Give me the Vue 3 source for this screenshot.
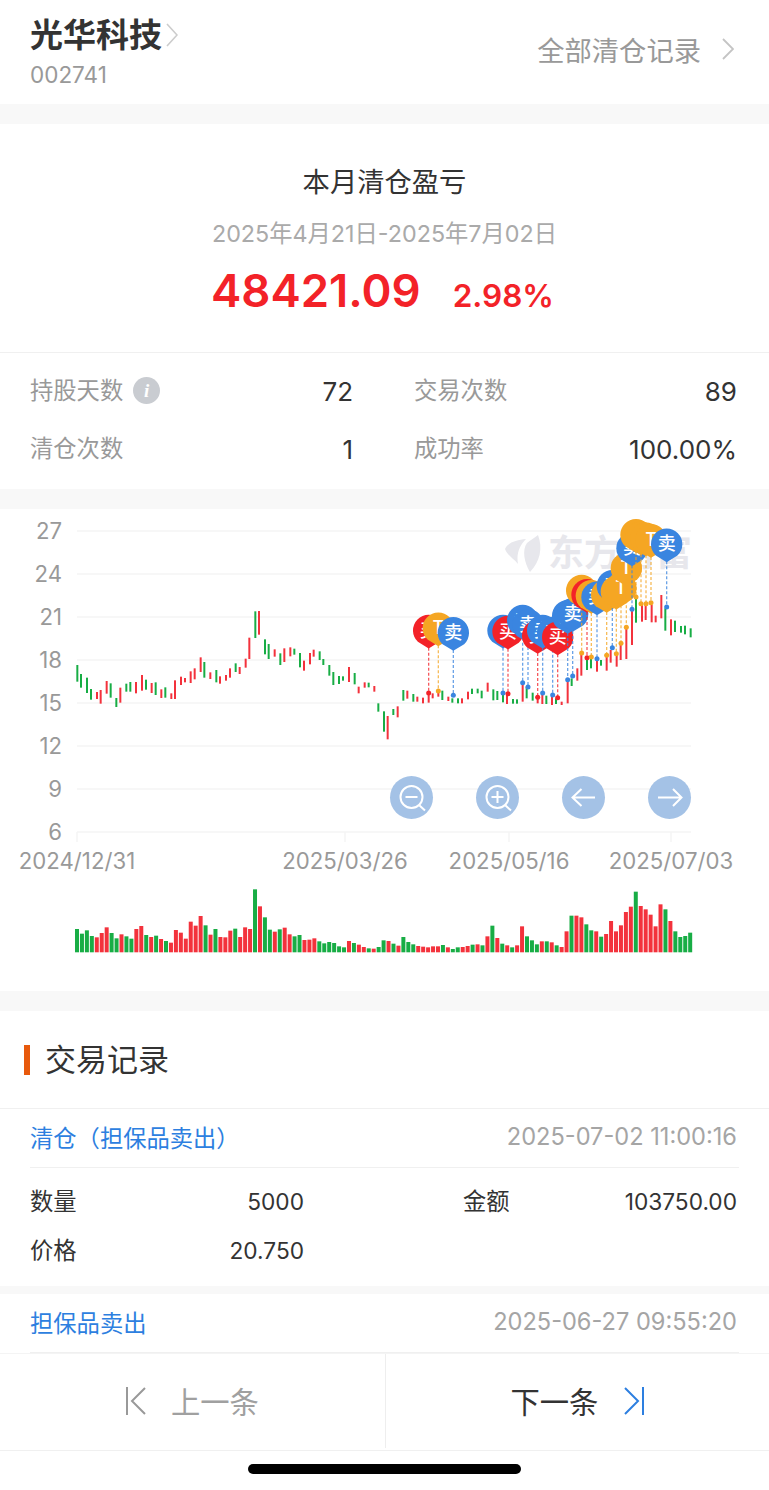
<template>
  <div class="page">
    <header class="head">
      <div>
        <div class="stock">
          <span class="stock-name">光华科技</span>
          <svg class="chev-s" viewBox="0 0 12 24"><path d="M1 1l10 11L1 23" /></svg>
        </div>
        <div class="stock-code">002741</div>
      </div>
      <div class="all-link">
        <span>全部清仓记录</span>
        <svg class="chev-r" viewBox="0 0 12 22"><path d="M1 1l10 10L1 21" /></svg>
      </div>
    </header>

    <section class="summary">
      <div class="sum-title">本月清仓盈亏</div>
      <div class="sum-date">2025年4月21日-2025年7月02日</div>
      <div class="sum-value">
        <span class="profit">48421.09</span>
        <span class="percent">2.98%</span>
      </div>
    </section>

    <section class="stats">
      <div class="stat">
        <span class="stat-label">持股天数<i class="info">i</i></span>
        <span class="stat-val">72</span>
      </div>
      <div class="stat">
        <span class="stat-label">交易次数</span>
        <span class="stat-val">89</span>
      </div>
      <div class="stat">
        <span class="stat-label">清仓次数</span>
        <span class="stat-val">1</span>
      </div>
      <div class="stat">
        <span class="stat-label">成功率</span>
        <span class="stat-val">100.00%</span>
      </div>
    </section>

    <section class="chart">
      <svg class="chart-svg" viewBox="0 509 769 482" width="769" height="482">
        <!-- 水印 -->
        <g fill="#e7e7ec">
          <path d="M505 549C507 543 516 540 526 539C520 545 516 553 518 564C513 558 507 555 505 549Z" />
          <path d="M538 535C543 548 540 562 530 572C524 562 522 550 527 543C530 540 535 538 538 535Z" />
          <text x="548" y="566" class="mark">东方财富</text>
        </g>
        <line v-for="y in gridY" :key="y" x1="77" x2="691" :y1="y" :y2="y" class="grid" />
        <text v-for="(l, i) in yLabels" :key="l" x="62" :y="gridY[i] + 8" class="axis" text-anchor="end">{{ l }}</text>
        <line v-for="t in xTicks" :key="t.x" :x1="t.x" :x2="t.x" y1="832" y2="842" class="grid" />
        <text v-for="t in xTicks" :key="t.label" :x="t.tx" y="869" class="axis" text-anchor="middle">{{ t.label }}</text>

        <rect v-for="(c, i) in candles" :key="'c' + i" :x="c.x - 1" :y="c.y" width="2" :height="c.h" :fill="c.color" />

        <g v-for="(p, i) in pins" :key="'p' + i">
          <line :x1="p.x" :x2="p.x" :y1="p.y + 17" :y2="p.dot" :stroke="p.color" stroke-width="1.300" stroke-dasharray="3 2" opacity="0.75" />
          <circle :cx="p.x" :cy="p.dot" r="2.500" :fill="p.color" />
          <g :transform="`translate(${p.x} ${p.y})`">
            <path d="M0 17.800L-10.800 11.200A15.700 15.700 0 1 1 10.800 11.200Z" :fill="p.color" />
            <text y="6" class="pin-text" text-anchor="middle">{{ p.text }}</text>
          </g>
        </g>

        <rect v-for="(v, i) in volumes" :key="'v' + i" :x="v.x" :y="v.y" width="4" :height="v.h" :fill="v.color" />
      </svg>
      <div class="tools">
        <div class="tool">
          <svg viewBox="0 0 43 43"><circle cx="21.500" cy="21" r="11" /><path d="M15.500 21h12M29 29l6 5.500" /></svg>
        </div>
        <div class="tool">
          <svg viewBox="0 0 43 43"><circle cx="21.500" cy="21" r="11" /><path d="M15.500 21h12M21.500 15v12M29 29l6 5.500" /></svg>
        </div>
        <div class="tool">
          <svg viewBox="0 0 43 43"><path d="M33 21.500H10.500M19.500 13l-9 8.500 9 8.500" /></svg>
        </div>
        <div class="tool">
          <svg viewBox="0 0 43 43"><path d="M10 21.500h23M25 13l8.500 8.500L25 30" /></svg>
        </div>
      </div>
    </section>

    <section class="records">
      <h2 class="rec-title"><span>交易记录</span></h2>
      <div class="rec">
        <div class="rec-head">
          <span class="rec-type">清仓（担保品卖出）</span>
          <span class="rec-time">2025-07-02 11:00:16</span>
        </div>
        <div class="rec-body">
          <div class="cell left"><span>数量</span><span>5000</span></div>
          <div class="cell right"><span>金额</span><span>103750.00</span></div>
          <div class="cell left"><span>价格</span><span>20.750</span></div>
        </div>
      </div>
      <div class="rec next">
        <div class="rec-head">
          <span class="rec-type">担保品卖出</span>
          <span class="rec-time">2025-06-27 09:55:20</span>
        </div>
      </div>
    </section>

    <footer class="pager">
      <div class="pg prev">
        <svg width="20" height="28" viewBox="0 0 20 28"><path d="M1 0v28M19 1L6 14l13 13" /></svg>
        <span>上一条</span>
      </div>
      <div class="pg nxt">
        <span>下一条</span>
        <svg width="20" height="28" viewBox="0 0 20 28"><path d="M1 1l13 13L1 27M19 0v28" /></svg>
      </div>
    </footer>
    <div class="home-wrap"><div class="home-bar"></div></div>
  </div>
</template>

<script setup>
const RED = '#f3323c'
const GREEN = '#18ad45'
const BLUE = '#3a85e0'
const ORANGE = '#f5a623'
const PIN_RED = '#f32228'

const gridY = [531, 574, 617, 660, 703, 746, 789, 832]
const yLabels = ['27', '24', '21', '18', '15', '12', '9', '6']

const xTicks = [
  { x: 77, tx: 77, label: '2024/12/31' },
  { x: 345, tx: 345, label: '2025/03/26' },
  { x: 509, tx: 509, label: '2025/05/16' },
  { x: 671, tx: 671, label: '2025/07/03' }
]

// 坐标从参考图量出来的：[x, 上, 下, 颜色]
const leftCandles = [
  [232,465,515,'g'],[243,492,533,'g'],[261,503,549,'g'],[273,537,569,'g'],[291,546,567,'r'],[302,540,581,'r'],
  [320,513,551,'r'],[332,520,563,'g'],[349,564,591,'g'],[361,533,578,'r'],[379,521,545,'g'],[391,516,545,'g'],
  [408,516,550,'r'],[426,495,542,'r'],[438,509,539,'g'],[455,519,549,'r'],[467,517,555,'g'],[484,538,564,'r'],
  [496,532,563,'g'],[514,550,567,'r'],[525,511,567,'r'],[543,500,525,'r'],[555,504,517,'r'],[572,484,519,'r'],
  [584,475,508,'r'],[602,442,486,'r'],[613,456,503,'g'],[631,487,507,'r'],[649,480,517,'g'],[660,499,521,'r'],
  [678,495,512,'r'],[690,475,503,'r'],[707,460,486,'g'],[719,471,492,'r'],[737,446,473,'r'],[748,383,447,'r'],
  [766,304,384,'g'],[777,303,374,'r'],[795,388,433,'g'],[806,402,447,'g'],[824,418,440,'r'],[841,430,465,'g'],
  [853,415,456,'r'],[871,412,439,'r'],[883,416,434,'g'],[900,429,472,'g'],[912,452,482,'r'],[930,429,463,'r'],
  [941,419,440,'r'],[959,424,450,'g'],[970,447,465,'g'],[988,465,497,'g'],[1000,486,525,'g'],[1017,498,522,'g'],
  [1029,499,512,'g'],[1047,471,516,'r'],[1064,489,523,'g'],[1076,530,550,'r'],[1094,517,533,'r'],[1106,518,532,'g'],
  [1123,528,545,'r'],[1135,580,605,'g'],[1152,604,665,'g']
]
const rightCandles = [
  [8,618,688,'r'],[25,597,615,'g'],[38,589,622,'r'],[55,540,572,'g'],[67,542,566,'r'],[85,552,575,'g'],
  [97,560,575,'r'],[114,563,580,'r'],[131,545,578,'r'],[143,550,565,'r'],[160,545,560,'r'],[172,542,570,'g'],
  [190,560,573,'r'],[202,565,578,'g'],[219,565,580,'g'],[231,565,580,'r'],[249,545,568,'r'],[261,536,552,'g'],
  [278,536,550,'g'],[290,542,565,'g'],[308,518,545,'r'],[325,538,571,'g'],[337,543,570,'g'],[354,545,577,'g'],
  [366,550,582,'r'],[384,567,581,'g'],[396,568,581,'g'],[413,525,575,'r'],[425,530,565,'g'],[443,548,572,'g'],
  [458,555,580,'r'],[472,555,582,'r'],[484,557,582,'g'],[501,560,585,'r'],[513,565,582,'g'],[530,575,585,'r'],
  [548,510,580,'r'],[560,505,528,'g'],[577,475,512,'r'],[589,432,497,'r'],[606,450,480,'g'],[618,447,475,'g'],
  [636,450,485,'r'],[648,450,467,'g'],[665,440,482,'r'],[677,420,458,'r'],[695,430,470,'r'],[707,405,450,'r'],
  [724,355,447,'r'],[741,300,405,'r'],[753,265,338,'g'],[771,285,335,'r'],[782,285,330,'r'],[800,285,337,'r'],
  [812,317,337,'r'],[829,255,325,'r'],[841,295,362,'g'],[858,328,376,'r'],[870,332,366,'g'],[888,348,368,'g'],
  [900,347,373,'g'],[917,355,382,'g']
]

const candles = [
  ...leftCandles.map(([x, t, b, c]) => ({ x: x / 3, y: 510 + t / 3, h: (b - t) / 3, color: c === 'r' ? RED : GREEN })),
  ...rightCandles.map(([x, t, b, c]) => ({ x: 385 + x / 3, y: 510 + t / 3, h: (b - t) / 3, color: c === 'r' ? RED : GREEN }))
]

const pinStyle = {
  b: { color: BLUE, text: '卖' },
  r: { color: PIN_RED, text: '买' },
  o: { color: ORANGE, text: 'T' }
}
const pins = [
  [131,362,549,'r'],[160,355,543,'o'],[205,369,556,'b'],[354,362,549,'b'],[369,365,551,'r'],[413,332,518,'b'],
  [429,345,531,'b'],[458,378,562,'r'],[473,362,549,'b'],[503,368,555,'b'],[518,382,563,'r'],[548,318,509,'b'],
  [563,312,498,'b'],[590,242,429,'o'],[606,255,443,'r'],[619,258,441,'o'],[636,262,446,'b'],[665,255,436,'o'],
  [682,228,413,'b'],[694,245,431,'o'],[708,235,400,'o'],[724,175,352,'o'],[741,115,298,'b'],[753,75,261,'o'],
  [768,82,281,'o'],[783,85,281,'o'],[798,90,278,'o'],[845,103,291,'b']
].map(([x, y, dot, t]) => ({
  x: 385 + x / 3,
  y: 510 + y / 3,
  dot: 510 + dot / 3,
  ...pinStyle[t]
}))

// 成交量柱顶部，同样来自参考图
const volLeft = 'g507 g521 g511 g528 r532 r519 r502 g519 g535 r523 g529 g536 r507 r498 g525 r531 g527 r537 g543 r548 r510 r518 r536 r485 r497 r468 g496 r524 g507 r531 r532 r512 g506 r531 r502 r507 g388 r439 g472 g509 r515 g508 r503 r523 g529 g525 r540 r539 r535 g544 g550 g546 g549 g559 g562 r543 g549 r554 r561 g565 r566 g561 g541'
const volRight = 'r543 g551 r557 g531 g546 g553 r558 r560 r562 r559 r559 g555 r562 g567 g562 r561 r558 g554 r553 g556 r529 g497 r534 g551 r556 g562 r556 r499 g529 g541 g553 r544 g544 r547 g556 r561 r514 g467 r467 r472 g493 g511 r514 g530 r522 r483 r514 r496 r456 r440 g395 r438 r448 r464 r499 r433 g448 r483 g514 g531 g528 g518'
const volumes = (volLeft + ' ' + volRight).split(' ').map((s, i) => {
  const top = 760 + Number(s.slice(1)) / 3
  return {
    x: 75 + i * 4.945,
    y: top,
    h: 952.3 - top,
    color: s[0] === 'r' ? RED : GREEN
  }
})
</script>

<style>
html, body {
  margin: 0;
  background: #fff;
}
</style>

<style scoped>
.page {
  width: 769px;
  height: 1490px;
  overflow: hidden;
  background: #f8f8f8;
  font-family: Inter, "Noto Sans CJK SC", sans-serif;
  color: #333;
  display: flex;
  flex-direction: column;
}

.head {
  height: 104px;
  flex: none;
  box-sizing: border-box;
  padding: 14px 35px 0 30px;
  background: #fff;
  display: flex;
  justify-content: space-between;
}

.stock {
  display: flex;
  align-items: center;
  height: 42px;
}

.stock-name {
  font-size: 33px;
  font-weight: 700;
  line-height: 42px;
}

.chev-s {
  width: 12px;
  height: 24px;
  margin-left: 4px;
  fill: none;
  stroke: #ccc;
  stroke-width: 1.600;
}

.stock-code {
  font-size: 22.500px;
  line-height: 30px;
  color: #999;
  margin-top: 4px;
}

.all-link {
  display: flex;
  align-items: center;
  height: 46px;
  margin-top: 12px;
  font-size: 27.300px;
  color: #999;
}

.chev-r {
  width: 12px;
  height: 22px;
  margin-left: 21px;
  fill: none;
  stroke: #c4c4c4;
  stroke-width: 1.800;
}

.summary {
  flex: none;
  margin-top: 20px;
  height: 229px;
  box-sizing: border-box;
  padding-top: 40px;
  background: #fff;
  border-bottom: 1px solid #f0f0f0;
  text-align: center;
}

.sum-title {
  font-size: 27.300px;
  line-height: 38px;
}

.sum-date {
  margin-top: 17px;
  font-size: 23.300px;
  line-height: 30px;
  color: #aaa;
}

.sum-value {
  margin-top: 13px;
  padding-right: 4px;
  display: flex;
  justify-content: center;
  align-items: baseline;
  gap: 32px;
  color: #f32228;
  line-height: 58px;
}

.profit {
  font-size: 45.500px;
  font-weight: 600;
}

.percent {
  font-size: 31.500px;
  font-weight: 600;
}

.stats {
  flex: none;
  height: 136px;
  box-sizing: border-box;
  padding: 9px 32px 0 30px;
  background: #fff;
  display: grid;
  grid-template-columns: 323px 323px;
  grid-auto-rows: 58px;
  column-gap: 61px;
}

.stat {
  display: flex;
  justify-content: space-between;
  align-items: center;
}

.stat-label {
  display: flex;
  align-items: center;
  padding-bottom: 4px;
  font-size: 23.300px;
  color: #999;
}

.info {
  width: 27px;
  height: 27px;
  margin: 2px 0 0 10px;
  border-radius: 50%;
  background: #c9ccd1;
  color: #fff;
  font: italic 700 19px/27px "Liberation Serif", serif;
  text-align: center;
}

.stat-val {
  font-size: 26px;
  color: #333;
}

.chart {
  flex: none;
  position: relative;
  margin-top: 20px;
  height: 482px;
  background: #fff;
}

.chart-svg {
  display: block;
}

.grid {
  stroke: #f4f4f4;
  stroke-width: 1.500;
}

.axis {
  font-size: 22.200px;
  fill: #999;
  font-family: Inter, sans-serif;
}

.mark {
  font-size: 36px;
  font-weight: 700;
  font-family: "Noto Sans CJK SC", sans-serif;
}

.pin-text {
  font-size: 18px;
  font-weight: 500;
  fill: #fff;
  font-family: "Noto Sans CJK SC", sans-serif;
}

.tools {
  position: absolute;
  left: 390px;
  top: 267px;
  display: flex;
  gap: 43px;
}

.tool {
  width: 43px;
  height: 43px;
  border-radius: 50%;
  background: #a4c2e6;
}

.tool svg {
  display: block;
  width: 43px;
  height: 43px;
  fill: none;
  stroke: #fff;
  stroke-width: 2;
}

.records {
  flex: none;
  margin-top: 20px;
}

.rec-title {
  margin: 0;
  height: 98px;
  box-sizing: border-box;
  padding: 34px 0 0 24px;
  background: #fff;
  border-bottom: 1px solid #f0f0f0;
  font-weight: 400;
}

.rec-title span {
  display: block;
  height: 30px;
  padding-left: 15px;
  border-left: 6px solid #e8590c;
  font-size: 31px;
  line-height: 30px;
}

.rec {
  background: #fff;
  padding: 0 30px;
}

.rec-head {
  height: 59px;
  box-sizing: border-box;
  padding-bottom: 3px;
  border-bottom: 1px solid #f0f0f0;
  display: flex;
  justify-content: space-between;
  align-items: center;
}

.rec-type {
  font-size: 23.300px;
  color: #2d7fe0;
}

.rec-time {
  margin-right: 2px;
  font-size: 23.600px;
  color: #a5a5a5;
}

.rec-body {
  height: 118px;
  box-sizing: border-box;
  padding-top: 9px;
  display: grid;
  grid-template-columns: 274px 274px;
  grid-auto-rows: 49px;
  column-gap: 159px;
  font-size: 22.700px;
}

.cell {
  display: flex;
  justify-content: space-between;
  align-items: center;
}

.cell span:first-child {
  padding-bottom: 4px;
  font-size: 23.300px;
}

.rec.next {
  margin-top: 8px;
}

.pager {
  flex: none;
  height: 98px;
  box-sizing: border-box;
  padding-bottom: 2px;
  background: #fff;
  border-top: 1px solid #f4f4f4;
  border-bottom: 1px solid #f0f0f0;
  display: flex;
}

.pg {
  flex: 1;
  display: flex;
  align-items: center;
  font-size: 29.300px;
}

.pg span {
  padding-bottom: 3px;
}

.pg svg {
  fill: none;
  stroke-width: 2;
}

.prev {
  padding-left: 126px;
  gap: 25px;
  color: #a0a0a0;
  border-right: 1px solid #eee;
}

.prev svg {
  stroke: #999;
}

.nxt {
  padding-left: 125px;
  gap: 26px;
  color: #333;
}

.nxt svg {
  stroke: #2d7fe0;
}

.home-wrap {
  flex: 1;
  padding-top: 13px;
  box-sizing: border-box;
  background: #fff;
}

.home-bar {
  width: 273px;
  height: 10px;
  margin-left: 248px;
  border-radius: 5px;
  background: #000;
}
</style>
